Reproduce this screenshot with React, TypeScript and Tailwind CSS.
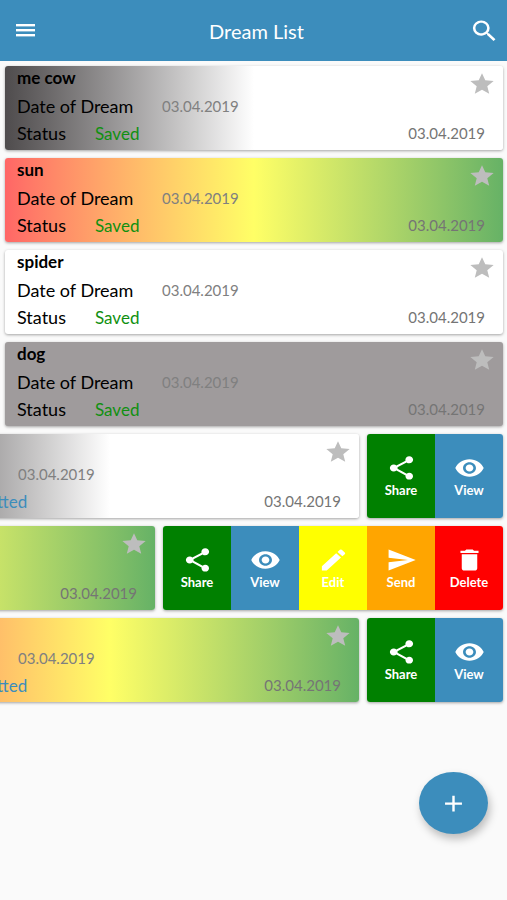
import React from "react";
import {
  MdAdd,
  MdDelete,
  MdEdit,
  MdSearch,
  MdSend,
  MdShare,
  MdStar,
  MdVisibility,
} from "react-icons/md";
import type { IconType } from "react-icons";

type ActionName = "Share" | "View" | "Edit" | "Send" | "Delete";

interface Dream {
  title: string;
  status: "Saved" | "Submitted";
  background: string;
  actions: ActionName[];
}

const ACTIONS: Record<ActionName, { icon: IconType; color: string }> = {
  Share: { icon: MdShare, color: "bg-[#008000]" },
  View: { icon: MdVisibility, color: "bg-[#3c8dbc]" },
  Edit: { icon: MdEdit, color: "bg-[#ffff00]" },
  Send: { icon: MdSend, color: "bg-[#ffa500]" },
  Delete: { icon: MdDelete, color: "bg-[#ff0000]" },
};

const FADE = "bg-linear-to-r from-[#4f4c4d] to-white to-50%";
const RAINBOW = "bg-linear-to-r from-[#ff6666] via-[#ffff66] to-[#66b266]";

const DREAMS: Dream[] = [
  { title: "me cow", status: "Saved", background: FADE, actions: [] },
  { title: "sun", status: "Saved", background: RAINBOW, actions: [] },
  { title: "spider", status: "Saved", background: "bg-white", actions: [] },
  { title: "dog", status: "Saved", background: "bg-[#9f9b9c]", actions: [] },
  { title: "", status: "Submitted", background: FADE, actions: ["Share", "View"] },
  {
    title: "",
    status: "Saved",
    background: RAINBOW,
    actions: ["Share", "View", "Edit", "Send", "Delete"],
  },
  { title: "", status: "Submitted", background: RAINBOW, actions: ["Share", "View"] },
];

function MenuIcon() {
  return (
    <svg viewBox="0 0 19 13" className="h-[13px] w-[19px]" fill="currentColor" aria-hidden="true">
      <rect x="0" y="0" width="19" height="2.4" />
      <rect x="0" y="5" width="19" height="2.4" />
      <rect x="0" y="10" width="19" height="2.4" />
    </svg>
  );
}

function DreamRow({ dream }: { dream: Dream }) {
  const statusColor = dream.status === "Saved" ? "text-[#109010]" : "text-[#3c8dbc]";
  return (
    <li className="flex justify-end gap-2">
      <article
        className={`flex h-[84px] w-full shrink-0 justify-between rounded-[3px] pl-3 shadow-[0_1px_3px_rgba(0,0,0,0.35)] ${dream.background}`}
      >
        <div className="text-[17px] leading-[27px] text-black">
          <h2 className="h-[27px] leading-6 font-bold">{dream.title}</h2>
          <p className="flex gap-6">
            <span className="min-w-[121px] text-[18px]">Date of Dream</span>
            <time className="text-[15px] text-[#808080]">03.04.2019</time>
          </p>
          <p className="flex gap-6">
            <span className="min-w-[54px] text-[18px]">Status</span>
            <span className={statusColor}>{dream.status}</span>
          </p>
        </div>
        <div className="flex flex-col items-end pt-[5px]">
          <button type="button" aria-label="Favourite" className="mr-[7px] text-[#bdbdbd]">
            <MdStar preserveAspectRatio="none" className="h-[26px] w-7" />
          </button>
          <time className="mt-[23px] mr-[18px] text-[15px] leading-[27px] text-[#757575]">
            03.04.2019
          </time>
        </div>
      </article>
      {dream.actions.length > 0 && (
        <div className="flex shrink-0 overflow-hidden rounded-[3px] shadow-[0_1px_3px_rgba(0,0,0,0.35)]">
          {dream.actions.map((name) => {
            const Icon = ACTIONS[name].icon;
            return (
              <button
                key={name}
                type="button"
                className={`flex w-[68px] flex-col items-center pt-5 text-[13px] leading-4 font-bold text-white ${ACTIONS[name].color}`}
              >
                <Icon preserveAspectRatio="none" className="h-7 w-[31px]" />
                {name}
              </button>
            );
          })}
        </div>
      )}
    </li>
  );
}

export default function App() {
  return (
    <div className="min-h-screen overflow-x-clip bg-[#fafafa] font-['Lato','Noto_Sans',sans-serif]">
      <header className="flex h-[61px] items-center justify-between bg-[#3c8dbc] pr-[7px] pl-4 text-white">
        <button type="button" aria-label="Menu" className="w-7">
          <MenuIcon />
        </button>
        <h1 className="text-[20px] leading-6">Dream List</h1>
        <button type="button" aria-label="Search">
          <MdSearch preserveAspectRatio="none" className="h-7 w-[31px]" />
        </button>
      </header>
      <main>
        <ul className="flex flex-col gap-2 pt-[5px] pr-1 pl-[5px]">
          {DREAMS.map((dream, index) => (
            <DreamRow key={index} dream={dream} />
          ))}
        </ul>
      </main>
      <button
        type="button"
        aria-label="Add dream"
        className="fixed right-[19px] bottom-[66px] flex h-[62px] w-[69px] items-center justify-center rounded-[50%] bg-[#3c8dbc] text-white shadow-[2px_5px_8px_rgba(0,0,0,0.25)]"
      >
        <MdAdd preserveAspectRatio="none" className="h-[27px] w-[29px]" />
      </button>
    </div>
  );
}
